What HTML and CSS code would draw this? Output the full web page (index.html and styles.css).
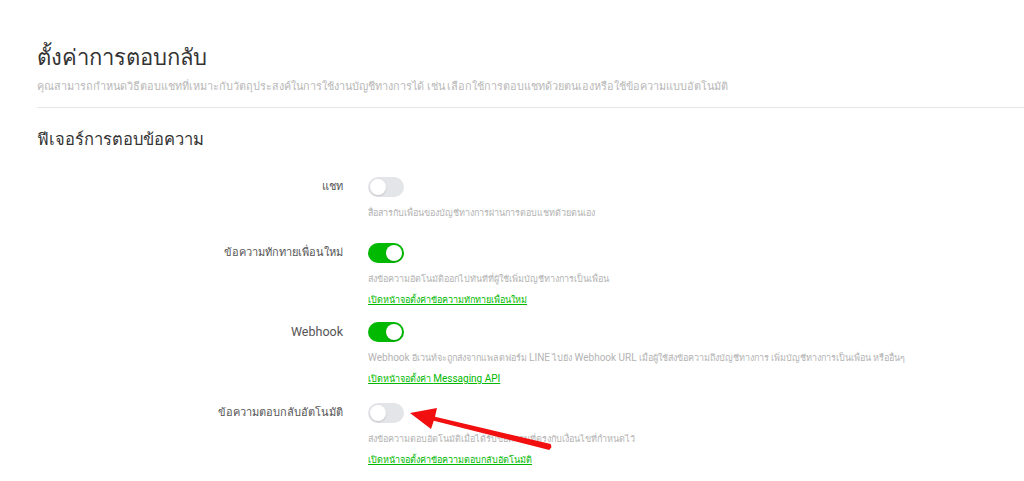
FILE: index.html
```html
<!DOCTYPE html>
<html lang="th">
<head>
<meta charset="utf-8">
<title>ตั้งค่าการตอบกลับ</title>
<link rel="stylesheet" href="styles.css">
</head>
<body>
<div class="page">
  <header class="head">
    <h1 class="title">ตั้งค่าการตอบกลับ</h1>
    <p class="subtitle">คุณสามารถกำหนดวิธีตอบแชทที่เหมาะกับวัตถุประสงค์ในการใช้งานบัญชีทางการได้ เช่น เลือกใช้การตอบแชทด้วยตนเองหรือใช้ข้อความแบบอัตโนมัติ</p>
  </header>
  <hr class="divider">
  <section class="section">
    <h2 class="section-title">ฟีเจอร์การตอบข้อความ</h2>

    <div class="row row-first">
      <div class="label">แชท</div>
      <div class="control">
        <span class="toggle"><span class="knob"></span></span>
        <p class="desc">สื่อสารกับเพื่อนของบัญชีทางการผ่านการตอบแชทด้วยตนเอง</p>
      </div>
    </div>

    <div class="row">
      <div class="label">ข้อความทักทายเพื่อนใหม่</div>
      <div class="control">
        <span class="toggle on"><span class="knob"></span></span>
        <p class="desc">ส่งข้อความอัตโนมัติออกไปทันทีที่ผู้ใช้เพิ่มบัญชีทางการเป็นเพื่อน</p>
        <a class="link" href="#">เปิดหน้าจอตั้งค่าข้อความทักทายเพื่อนใหม่</a>
      </div>
    </div>

    <div class="row">
      <div class="label"><span class="latin-label">Webhook</span></div>
      <div class="control">
        <span class="toggle on"><span class="knob"></span></span>
        <p class="desc"><span class="latin">Webhook</span> อีเวนท์จะถูกส่งจากแพลตฟอร์ม <span class="latin">LINE</span> ไปยัง <span class="latin">Webhook URL</span> เมื่อผู้ใช้ส่งข้อความถึงบัญชีทางการ เพิ่มบัญชีทางการเป็นเพื่อน หรืออื่นๆ</p>
        <a class="link" href="#">เปิดหน้าจอตั้งค่า <span class="latin">Messaging API</span></a>
      </div>
    </div>

    <div class="row row-last">
      <div class="label">ข้อความตอบกลับอัตโนมัติ</div>
      <div class="control">
        <span class="toggle"><span class="knob"></span></span>
        <p class="desc">ส่งข้อความตอบอัตโนมัติเมื่อได้รับข้อความที่ตรงกับเงื่อนไขที่กำหนดไว้</p>
        <a class="link" href="#">เปิดหน้าจอตั้งค่าข้อความตอบกลับอัตโนมัติ</a>
      </div>
    </div>
  </section>
</div>
<svg class="arrow" width="1024" height="481" viewBox="0 0 1024 481" aria-hidden="true">
  <polygon points="410,413 437,408 435,416.8 550.7,444 551.5,447 549.3,450 433.8,420.8 431,429" fill="#f20f0f"/>
</svg>
</body>
</html>
```

FILE: styles.css
```css
html, body {
  margin: 0;
  padding: 0;
  background: #ffffff;
}
body {
  font-family: Roboto, "Noto Sans", "DejaVu Sans", sans-serif;
  color: #333333;
  position: relative;
  height: 481px;
  overflow: hidden;
}
.page {
  padding: 43px 0 0 37px;
}
.head {
  margin: 0;
}
.title {
  margin: 0;
  font-size: 22px;
  font-weight: 400;
  line-height: 30px;
  color: #333333;
}
.subtitle {
  margin: 6px 0 0;
  font-size: 10.85px;
  line-height: 16px;
  color: #b8b8b8;
}
.divider {
  border: 0;
  border-top: 1px solid #e6e6e6;
  margin: 12px 0 0;
  height: 0;
}
.section-title {
  margin: 20px 0 0;
  font-size: 16.5px;
  font-weight: 400;
  line-height: 24px;
  color: #333333;
}
.row {
  display: grid;
  grid-template-columns: 306px 1fr;
  column-gap: 25px;
  margin-top: 14px;
}
.row-first {
  margin-top: 25px;
}
.row-first + .row {
  margin-top: 22px;
}
.row-last {
  margin-top: 16px;
}
.label {
  text-align: right;
  font-size: 11px;
  line-height: 20px;
  color: #555555;
}
.latin-label {
  font-size: 12.5px;
}
.control {
  display: flex;
  flex-direction: column;
  align-items: flex-start;
}
.toggle {
  display: block;
  position: relative;
  width: 36px;
  height: 20px;
  border-radius: 10px;
  background: #e3e5e8;
}
.toggle.on {
  background: #00b900;
}
.knob {
  position: absolute;
  top: 2px;
  left: 2px;
  width: 16px;
  height: 16px;
  border-radius: 50%;
  background: #ffffff;
  box-shadow: 0 1px 2px rgba(0,0,0,0.15);
}
.toggle.on .knob {
  left: 18px;
}
.desc {
  margin: 8px 0 0;
  font-size: 9px;
  line-height: 16px;
  color: #b3b3b3;
}
.latin {
  font-size: 10px;
}
.link {
  margin-top: 5px;
  font-size: 9px;
  line-height: 16px;
  color: #00b900;
  text-decoration: underline;
}
.arrow {
  position: absolute;
  left: 0;
  top: 0;
  pointer-events: none;
}
```
